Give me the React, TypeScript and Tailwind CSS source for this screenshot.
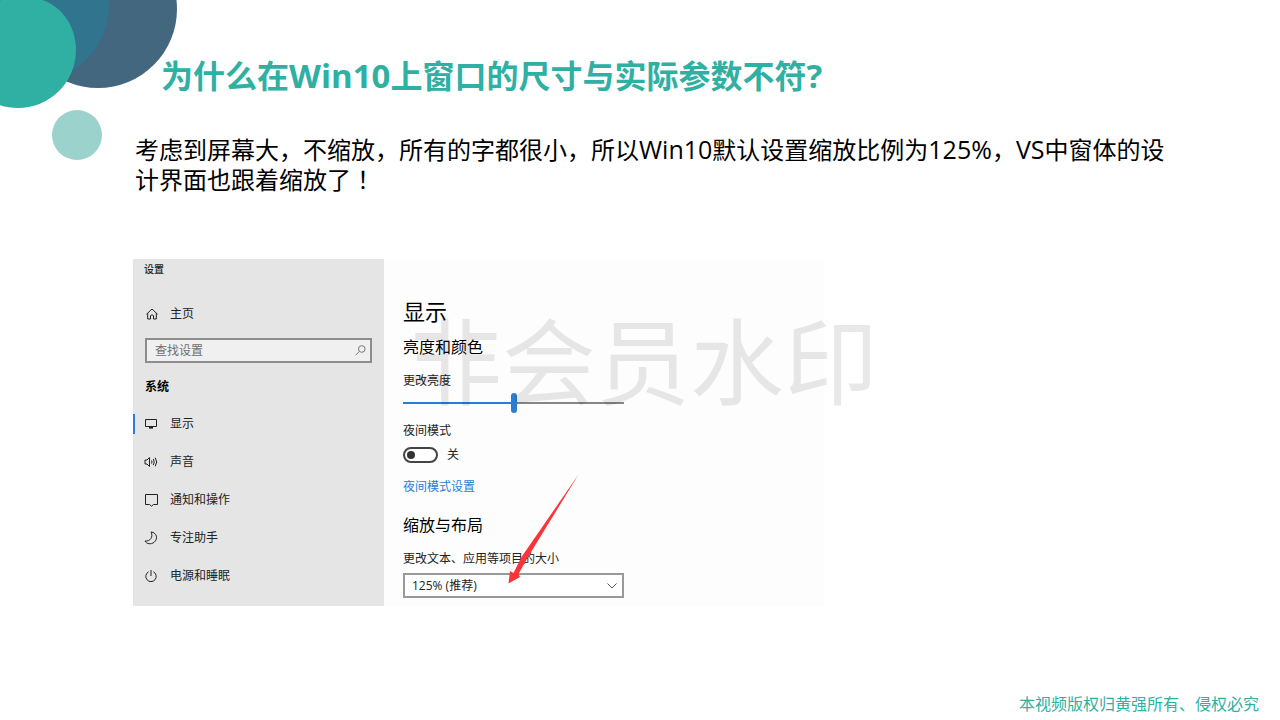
import React from "react";

const ink = "#222222";

function HomeIcon() {
  return (
    <svg width="12" height="12" viewBox="0 0 12 12" fill="none" stroke={ink} strokeWidth="1">
      <path d="M0.5 6.2 L6 1 L11.5 6.2 M1.7 5.2 V11 H4.5 V7.6 Q6 6 7.5 7.6 V11 H10.3 V5.2" />
    </svg>
  );
}

function MonitorIcon() {
  return (
    <svg width="14" height="14" viewBox="0 0 14 14" fill="none" stroke={ink} strokeWidth="1">
      <path d="M1.5 2.5 H12.5 V9.5 H1.5 Z" />
      <path d="M5 10.8 H9" strokeWidth="1.6" />
    </svg>
  );
}

function SoundIcon() {
  return (
    <svg width="14" height="14" viewBox="0 0 14 14" fill="none" stroke={ink} strokeWidth="1">
      <path d="M1 5 H3 L5.5 2.5 V11.5 L3 9 H1 Z" />
      <path d="M7.5 5.5 Q8.6 7 7.5 8.5 M9.3 4 Q11.2 7 9.3 10 M11.2 2.7 Q14.2 7 11.2 11.3" />
    </svg>
  );
}

function MessageIcon() {
  return (
    <svg width="14" height="14" viewBox="0 0 14 14" fill="none" stroke={ink} strokeWidth="1">
      <path d="M1.5 1.5 H13.5 V11.5 H9.5 L7.5 13.2 L5.5 11.5 H1.5 Z" />
    </svg>
  );
}

function MoonIcon() {
  return (
    <svg width="14" height="14" viewBox="0 0 14 14" fill="none" stroke={ink} strokeWidth="1">
      <path d="M7 1 C13 1.5 14.2 8 10.2 11.2 C7 13.8 2.6 13 1 10 C6 10.6 9.6 6 7 1 Z" />
    </svg>
  );
}

function PowerIcon() {
  return (
    <svg width="14" height="14" viewBox="0 0 14 14" fill="none" stroke={ink} strokeWidth="1">
      <path d="M7 1 V7 M4.6 2.8 A5.2 5.2 0 1 0 9.4 2.8" />
    </svg>
  );
}

const navItems = [
  { label: "显示", icon: MonitorIcon, active: true },
  { label: "声音", icon: SoundIcon, active: false },
  { label: "通知和操作", icon: MessageIcon, active: false },
  { label: "专注助手", icon: MoonIcon, active: false },
  { label: "电源和睡眠", icon: PowerIcon, active: false },
];

function Sidebar() {
  return (
    <nav className="w-[251px] shrink-0 bg-[#e5e5e5] pb-[11px] text-[12px] leading-5 text-[#222]">
      <div className="pl-[11px] text-[10px] font-medium">设置</div>
      <a href="#home" className="mt-[25px] flex items-center gap-3 pl-[13px]">
        <HomeIcon />
        主页
      </a>
      <div className="relative mx-3 mt-3.5 flex">
        <input
          type="search"
          aria-label="查找设置"
          placeholder="查找设置"
          className="h-[25px] w-full border-2 border-[#8d8d8d] bg-[#f0f0f0] px-2 text-[12px] outline-none placeholder:text-[#6e6e6e]"
        />
        <svg className="absolute right-1.5 top-[7px]" width="11" height="11" viewBox="0 0 11 11" fill="none" stroke="#777" strokeWidth="1">
          <circle cx="6.8" cy="4" r="3.3" />
          <path d="M4.4 6.4 L0.6 10.2" />
        </svg>
      </div>
      <h2 className="mt-3.5 pl-3 font-bold text-black">系统</h2>
      <ul className="mt-2">
        {navItems.map(({ label, icon: Icon, active }) => (
          <li key={label}>
            <a
              href="#settings"
              className={
                active
                  ? "flex h-[38px] items-center before:h-5 before:w-0.5 before:bg-[#2b7cd3]"
                  : "flex h-[38px] items-center before:w-0.5"
              }
            >
              <span className="ml-[9px] mr-3">
                <Icon />
              </span>
              {label}
            </a>
          </li>
        ))}
      </ul>
    </nav>
  );
}

function DisplaySettings() {
  return (
    <div className="relative flex w-[440px] flex-col items-start bg-[#fdfdfd] pl-[19px] text-[12px] leading-5 text-[#222]">
      <h2 className="mt-[35px] text-[22px] leading-[34px] text-black">显示</h2>
      <h3 className="mt-[7px] text-[16px] leading-6 text-black">亮度和颜色</h3>
      <label htmlFor="brightness" className="mt-3">更改亮度</label>
      <input
        id="brightness"
        type="range"
        min={0}
        max={100}
        defaultValue={50}
        className="mt-0.5 h-5 w-[221px] appearance-none bg-[linear-gradient(90deg,#2b7cd3_50%,#858585_50%)] bg-[length:100%_2px] bg-center bg-no-repeat [&::-webkit-slider-thumb]:h-5 [&::-webkit-slider-thumb]:w-1.5 [&::-webkit-slider-thumb]:appearance-none [&::-webkit-slider-thumb]:rounded-full [&::-webkit-slider-thumb]:bg-[#2b7cd3]"
      />
      <span className="mt-2">夜间模式</span>
      <label className="mt-1 flex items-center gap-[9px]">
        <input
          type="checkbox"
          role="switch"
          aria-label="夜间模式"
          className="flex h-4 w-[35px] appearance-none items-center rounded-full border-2 border-[#444] bg-white pl-0.5 before:size-2 before:rounded-full before:bg-[#333]"
        />
        关
      </label>
      <a href="#night" className="mt-3 text-[#2b7cd3]">夜间模式设置</a>
      <h3 className="mt-4 text-[16px] leading-6 text-black">缩放与布局</h3>
      <label htmlFor="scale" className="mt-3">更改文本、应用等项目的大小</label>
      <div className="relative mt-1 flex w-[221px]">
        <select
          id="scale"
          defaultValue="125"
          className="h-[25px] w-full appearance-none border-2 border-[#999] bg-white px-[7px] text-[12px] leading-5"
        >
          <option value="125">125% (推荐)</option>
        </select>
        <svg className="pointer-events-none absolute right-[7px] top-2.5" width="10" height="6" viewBox="0 0 10 6" fill="none" stroke="#555">
          <path d="M0.5 0.5 L5 5 L9.5 0.5" />
        </svg>
      </div>
      <svg className="pointer-events-none absolute left-[124px] top-[215px]" width="71" height="110" viewBox="0 0 71 110" fill="#fb3438">
        <path d="M70.5 0.5 L20 83 L10.5 100 L12 103 L0.5 109.5 L2 97 L5.5 99 L13.5 83 Z" />
      </svg>
    </div>
  );
}

export default function App() {
  return (
    <div className="relative flex min-h-screen flex-col overflow-hidden bg-white font-['Open_Sans','Noto_Sans_CJK_SC',sans-serif]">
      <svg className="absolute left-0 top-0" width="180" height="164" viewBox="0 0 180 164">
        <circle cx="98" cy="9" r="79" fill="#446780" />
        <circle cx="32" cy="5" r="77" fill="#31748d" />
        <path d="M18 108 C50 108 76 82 76 50 C76 24 58 -3 24 -3 C-16 -3 -40 22 -40 53 C-40 84 -14 108 18 108 Z" fill="#2fb0a3" />
        <circle cx="77" cy="135" r="25" fill="#9bd3cc" />
      </svg>

      <header className="relative pl-[161px] pt-14">
        <h1 className="text-[32px] font-bold leading-10 text-[#2fb0a3]">
          为什么在<span className="text-[33px]">Win10</span>上窗口的尺寸与实际参数不符<span className="text-[33px]">?</span>
        </h1>
      </header>

      <main className="relative pl-[133px] pr-[104px] pt-[39px]">
        <p className="pl-0.5 text-[24px] leading-[29px] text-black">
          考虑到屏幕大，不缩放，所有的字都很小，所以<span className="text-[25px]">Win10</span>默认设置缩放比例为
          <span className="text-[25px]">125%</span>，<span className="text-[25px]">VS</span>中窗体的设
          <br />
          计界面也跟着缩放了<span lang="zh-TW" className="font-['Noto_Sans_CJK_TC',sans-serif]">！</span>
        </p>
        <section className="relative mt-[65px] flex">
          <Sidebar />
          <DisplaySettings />
          <div className="pointer-events-none absolute left-[275px] top-9 whitespace-nowrap text-[94px] leading-[134px] text-black/9">
            非会员水印
          </div>
        </section>
      </main>

      <footer className="relative mt-auto pb-1 pr-[21px] text-right text-[16px] leading-6 text-[#2fb0a3]">
        本视频版权归黄强所有、侵权必究
      </footer>
    </div>
  );
}
